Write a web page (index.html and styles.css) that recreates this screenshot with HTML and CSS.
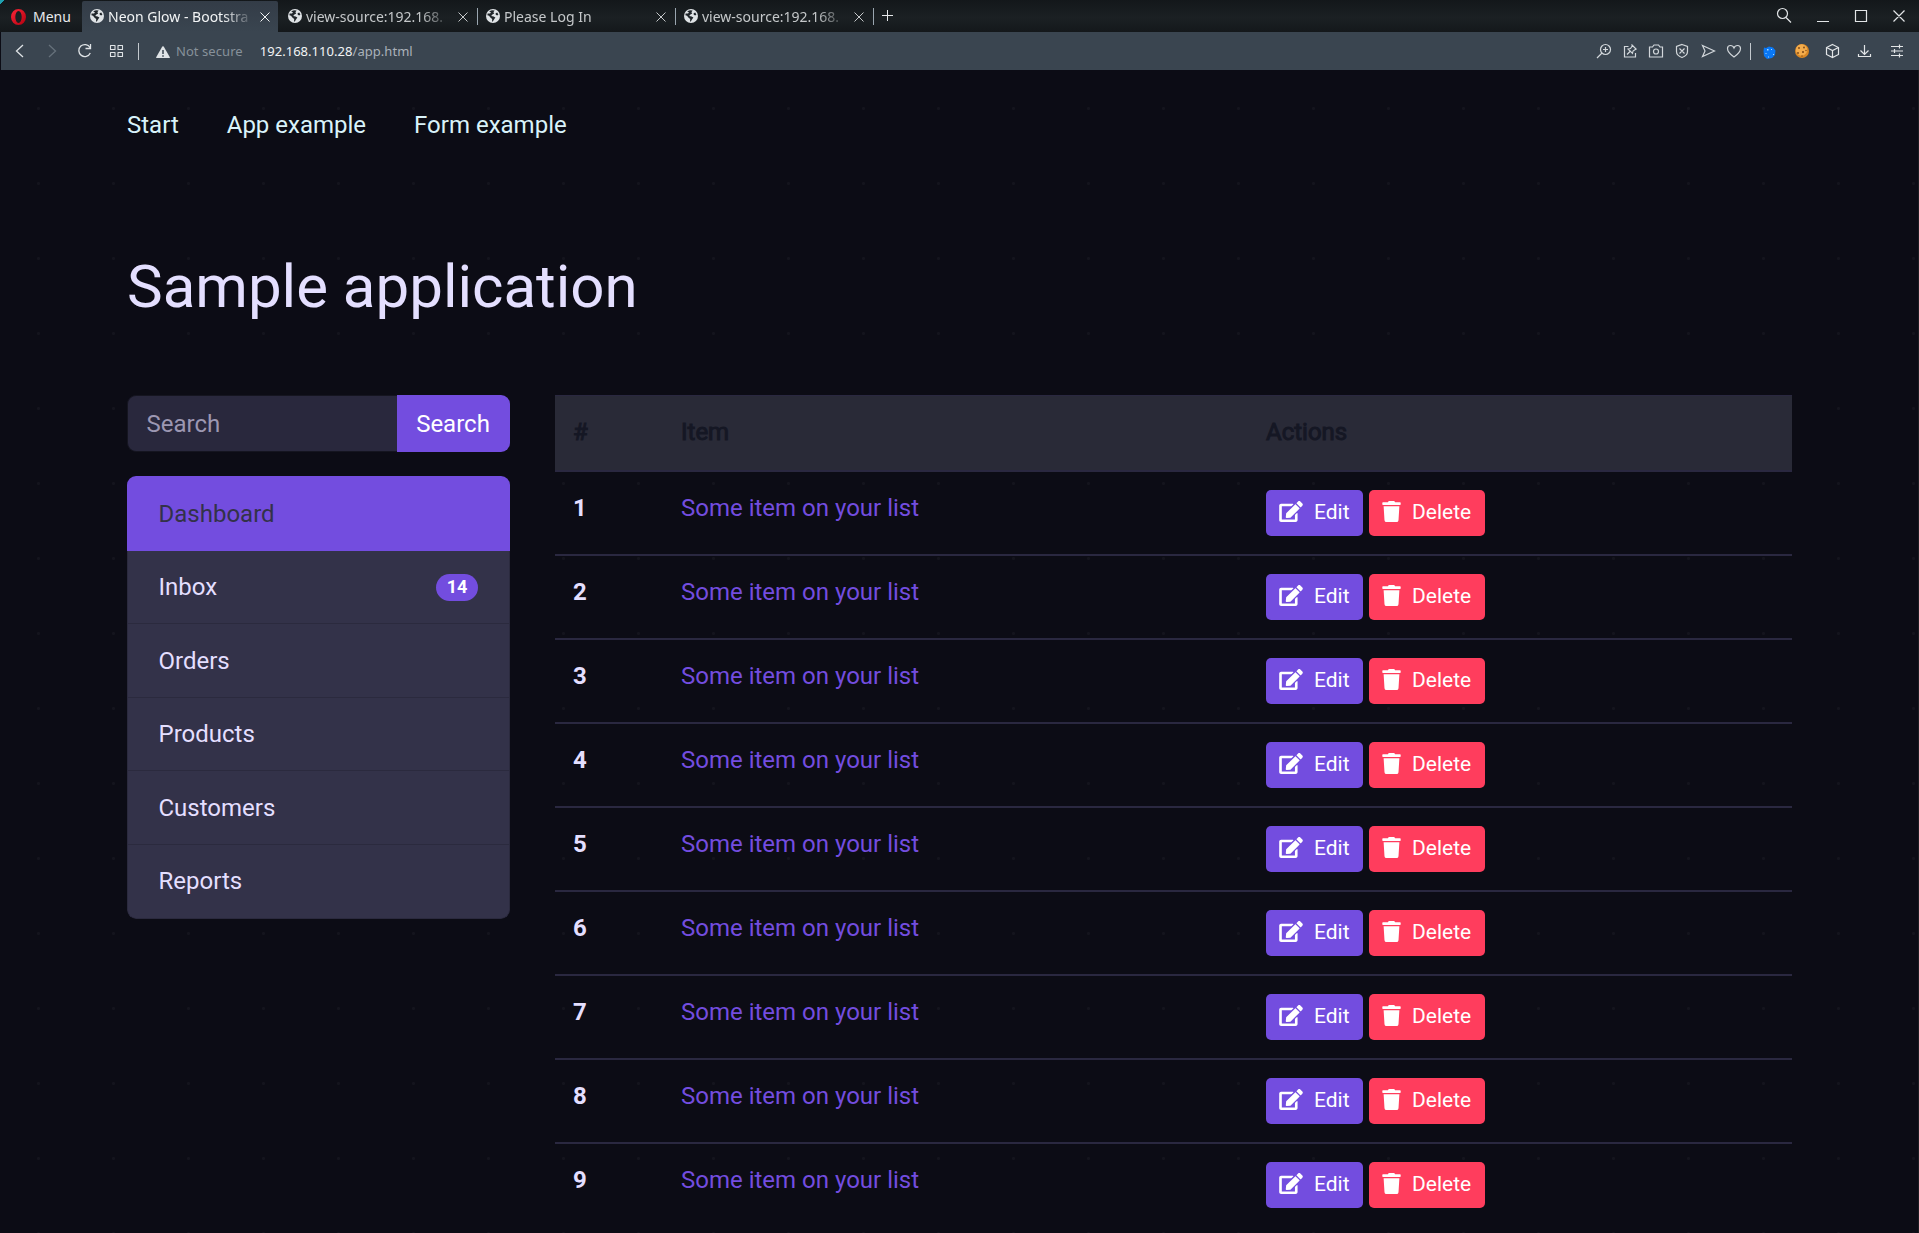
FILE: index.html
```html
<!DOCTYPE html>
<html lang="en">
<head>
<meta charset="utf-8">
<title>Neon Glow - Bootstrap</title>
<link rel="stylesheet" href="styles.css">
</head>
<body>
<svg class="defs" aria-hidden="true">
  <symbol id="globe" viewBox="0 0 14 14"><circle cx="7" cy="7" r="7" fill="#dfe3e6"/><path d="M3.2 2.2 6 1.2 8.6 1.6 7.4 3.2 8.2 4.6 6.4 5.6 5.2 7 7.6 7.4 9.4 8.6 8 10.4 6.8 12.6 6 12.4 6.2 10 4.6 8.8 3 6.8 1.4 6.2 1.6 4.6 4 4.6 5 3.4Z" fill="#20262b"/><path d="M9.6 4.2 11.2 3.4 12.4 5.4 11.2 6.6 9.8 5.8Z" fill="#20262b"/></symbol>
  <symbol id="cross" viewBox="0 0 10 10"><path d="M.5.5l9 9M9.5.5l-9 9" fill="none" stroke="currentColor"/></symbol>
  <symbol id="edit" viewBox="0 0 576 512"><path fill="currentColor" d="M402.6 83.2l90.2 90.2c3.8 3.8 3.8 10 0 13.8L274.4 405.6l-92.8 10.3c-12.4 1.4-22.9-9.1-21.5-21.5l10.3-92.8L388.8 83.2c3.8-3.8 10-3.8 13.8 0zm162-22.9l-48.8-48.8c-15.2-15.2-39.9-15.2-55.2 0l-35.4 35.4c-3.8 3.8-3.8 10 0 13.8l90.2 90.2c3.8 3.8 10 3.8 13.8 0l35.4-35.4c15.2-15.3 15.2-40 0-55.2zM384 346.2V448H64V128h229.8c3.2 0 6.2-1.3 8.5-3.5l40-40c7.6-7.6 2.2-20.5-8.5-20.5H48C21.5 64 0 85.5 0 112v352c0 26.5 21.5 48 48 48h352c26.5 0 48-21.5 48-48V306.2c0-10.7-12.9-16-20.5-8.5l-40 40c-2.2 2.3-3.5 5.3-3.5 8.5z"/></symbol>
  <symbol id="trash" viewBox="0 0 448 512"><path fill="currentColor" d="M432 32H312l-9.4-18.7A24 24 0 0 0 281.1 0H166.8a23.72 23.72 0 0 0-21.4 13.3L136 32H16A16 16 0 0 0 0 48v32a16 16 0 0 0 16 16h416a16 16 0 0 0 16-16V48a16 16 0 0 0-16-16zM53.2 467a48 48 0 0 0 47.9 45h245.8a48 48 0 0 0 47.9-45L416 128H32z"/></symbol>
</svg>

<header class="tabbar">
  <div class="menu">
    <svg width="15" height="16" viewBox="0 0 15 16"><defs><linearGradient id="o" x1="0" x2="1" y1="0" y2="1"><stop offset="0" stop-color="#ff2638"/><stop offset="1" stop-color="#b0000f"/></linearGradient></defs><path fill="url(#o)" fill-rule="evenodd" d="M7.5 0a7.5 8 0 1 0 0 16 7.5 8 0 1 0 0-16ZM7.5 2a3.2 6 0 1 1 0 12 3.2 6 0 1 1 0-12Z"/></svg>
    <span>Menu</span>
  </div>
  <div class="tab active"><svg class="globe"><use href="#globe"/></svg><span class="title">Neon Glow - Bootstra</span><svg class="close"><use href="#cross"/></svg></div>
  <div class="tab"><svg class="globe"><use href="#globe"/></svg><span class="title">view-source:192.168.</span><svg class="close"><use href="#cross"/></svg></div>
  <div class="tab"><svg class="globe"><use href="#globe"/></svg><span class="title">Please Log In</span><svg class="close"><use href="#cross"/></svg></div>
  <div class="tab"><svg class="globe"><use href="#globe"/></svg><span class="title">view-source:192.168.</span><svg class="close"><use href="#cross"/></svg></div>
  <svg class="plus" width="11" height="11" viewBox="0 0 11 11"><path d="M5.5 0v11M0 5.5h11" stroke="#e6e8ea"/></svg>
  <svg class="window-controls" width="130" height="32" viewBox="1776 0 130 32" fill="none" stroke="#e2e5e7" stroke-width="1.2"><circle cx="1782.500" cy="13.500" r="5"/><path d="M1786 17.500l5 5M1817 21.500h12M1855.500 10.500h11v11h-11zM1893.500 10.500l11 11M1904.500 10.500l-11 11"/></svg>
</header>

<div class="toolbar">
  <svg class="nav-icons" width="140" height="38" viewBox="10 0 140 38" fill="none" stroke="#dfe3e6" stroke-width="1.3">
    <path d="M23 13l-6.500 6 6.500 6"/><path d="M49 13l6.500 6-6.500 6" stroke="#66717b"/>
    <path d="M90 15.500a6 6 0 1 0 .3 5.500M90.500 12v4.500h-5"/>
    <path d="M110.500 13.500h4.500v4h-4.500zM118 13.500h4.500v4h-4.500zM110.500 20.500h4.500v4h-4.500zM118 20.500h4.500v4h-4.500z" stroke-width="1.100" stroke-linejoin="round"/>
    <path d="M138.500 11v17" stroke="#c3c9ce" stroke-width="1"/>
  </svg>
  <svg class="warning" width="14" height="12" viewBox="0 0 14 12"><path d="M6.300.5Q7 0 7.700.5L14 11.500 13.500 12H.5L0 11.500Z" fill="#dfe3e6"/><path d="M7 4v4M7 9.200v1.500" stroke="#3a4550" stroke-width="1.500"/></svg>
  <span class="insecure">Not secure</span>
  <span class="url">192.168.110.28<span class="path">/app.html</span></span>
  <svg class="actions" width="310" height="38" viewBox="1595 0 310 38" fill="none" stroke="#d2d7db" stroke-width="1.200">
    <circle cx="1605.500" cy="17.500" r="5"/><path d="M1602 21l-5 5M1603 17.500h5M1605.500 15v5"/>
    <path d="M1628.500 14.500h-4v10.500h11v-4M1627 22.500l3.500-3.500"/><path d="M1631.500 12.500l5 5M1632.500 13.500l-2 3-2.500.5 4.500 4.500.5-2.500 3-2" stroke-width="1.100"/>
    <path d="M1649.500 15h3l1.500-2h4.500l1.500 2h2.500v10h-13z"/><circle cx="1656" cy="19.500" r="2.500"/>
    <path d="M1682 12.500l5.500 2v5q0 4-5.500 6-5.500-2-5.500-6v-5zM1679.500 16.500l5 5M1684.500 16.500l-5 5"/>
    <path d="M1702.500 13.500l12 5.500-12 5.500 2.500-5.500z"/>
    <path d="M1734 25q-6.500-4.500-6.500-8.500 0-3 3-3 2.500 0 3.500 2.500 1-2.500 3.500-2.500 3 0 3 3 0 4-6.500 8.500z"/>
    <path d="M1750.500 11v17" stroke="#c3c9ce" stroke-width="1"/>
    <g stroke="none"><path d="M1764 15.500l2 .5 3-1.500 4 1 2.500 3-.5 4.500-3 3-5 1-3-3-.5-5z" fill="#0a78f5"/><path d="M1767 17h1.500v1.500h-1.500zM1771 17h1v1h-1zM1765.500 21h1v1h-1zM1768 24.500h1v1h-1zM1773 22h1v1h-1z" fill="#a8dcff"/>
    <circle cx="1802" cy="19" r="7" fill="#d98724"/><circle cx="1801.500" cy="18" r="5.700" fill="#f3ac4c"/><g fill="#7a4515"><circle cx="1799" cy="16" r=".9"/><circle cx="1804" cy="15.500" r=".9"/><circle cx="1798" cy="21" r=".9"/><circle cx="1803" cy="20" r="1"/><circle cx="1806" cy="18.500" r=".7"/><circle cx="1802" cy="24" r=".7"/></g></g>
    <path d="M1832.500 12.500l6 3v7l-6 3-6-3v-7zM1826.500 15.500l6 3 6-3M1832.500 18.500v7" stroke="#e2e5e7"/>
    <path d="M1864.500 13v9M1860.500 18.500l4 4 4-4M1858.500 22v2.500h12v-2.500" stroke="#e2e5e7"/>
    <path d="M1891 14.500h12M1891 19h12M1891 23.500h12M1899.500 12.500v4M1894.500 17v4M1899.500 21.500v4" stroke="#e2e5e7"/>
  </svg>
</div>

<main class="page">
  <nav class="topnav"><a>Start</a><a>App example</a><a>Form example</a></nav>
  <h1>Sample application</h1>
  <div class="columns">
    <aside>
      <div class="search"><div class="field">Search</div><div class="search-button">Search</div></div>
      <ul class="list">
        <li class="current">Dashboard</li>
        <li>Inbox<span class="badge">14</span></li>
        <li>Orders</li>
        <li>Products</li>
        <li>Customers</li>
        <li>Reports</li>
      </ul>
    </aside>
    <table>
      <colgroup><col class="col-number"><col class="col-item"><col></colgroup>
      <thead><tr><th>#</th><th>Item</th><th>Actions</th></tr></thead>
      <tbody>
        <tr><th>1</th><td>Some item on your list</td><td><div class="buttons"><a class="btn"><svg class="i-edit"><use href="#edit"/></svg>Edit</a><a class="btn danger"><svg class="i-trash"><use href="#trash"/></svg>Delete</a></div></td></tr>
        <tr><th>2</th><td>Some item on your list</td><td><div class="buttons"><a class="btn"><svg class="i-edit"><use href="#edit"/></svg>Edit</a><a class="btn danger"><svg class="i-trash"><use href="#trash"/></svg>Delete</a></div></td></tr>
        <tr><th>3</th><td>Some item on your list</td><td><div class="buttons"><a class="btn"><svg class="i-edit"><use href="#edit"/></svg>Edit</a><a class="btn danger"><svg class="i-trash"><use href="#trash"/></svg>Delete</a></div></td></tr>
        <tr><th>4</th><td>Some item on your list</td><td><div class="buttons"><a class="btn"><svg class="i-edit"><use href="#edit"/></svg>Edit</a><a class="btn danger"><svg class="i-trash"><use href="#trash"/></svg>Delete</a></div></td></tr>
        <tr><th>5</th><td>Some item on your list</td><td><div class="buttons"><a class="btn"><svg class="i-edit"><use href="#edit"/></svg>Edit</a><a class="btn danger"><svg class="i-trash"><use href="#trash"/></svg>Delete</a></div></td></tr>
        <tr><th>6</th><td>Some item on your list</td><td><div class="buttons"><a class="btn"><svg class="i-edit"><use href="#edit"/></svg>Edit</a><a class="btn danger"><svg class="i-trash"><use href="#trash"/></svg>Delete</a></div></td></tr>
        <tr><th>7</th><td>Some item on your list</td><td><div class="buttons"><a class="btn"><svg class="i-edit"><use href="#edit"/></svg>Edit</a><a class="btn danger"><svg class="i-trash"><use href="#trash"/></svg>Delete</a></div></td></tr>
        <tr><th>8</th><td>Some item on your list</td><td><div class="buttons"><a class="btn"><svg class="i-edit"><use href="#edit"/></svg>Edit</a><a class="btn danger"><svg class="i-trash"><use href="#trash"/></svg>Delete</a></div></td></tr>
        <tr><th>9</th><td>Some item on your list</td><td><div class="buttons"><a class="btn"><svg class="i-edit"><use href="#edit"/></svg>Edit</a><a class="btn danger"><svg class="i-trash"><use href="#trash"/></svg>Delete</a></div></td></tr>
      </tbody>
    </table>
  </div>
</main>
</body>
</html>
```

FILE: styles.css
```css
* { box-sizing: border-box; }
html { background: #0c0c15; }
body {
  margin: 0;
  width: 1919px;
  height: 1233px;
  overflow: hidden;
  display: flex;
  flex-direction: column;
  font-family: Roboto, sans-serif;
  font-size: 24px;
  line-height: 36px;
}
.defs { position: absolute; width: 0; height: 0; }

/* Browser chrome */
.tabbar {
  flex: none;
  display: flex;
  height: 32px;
  background: linear-gradient(135deg, #1fa0b0 3px, transparent 3px), linear-gradient(#13171a, #1b2023 55%, #14181b);
  font: 14px/18px "Noto Sans", sans-serif;
  color: #e8eaec;
}
.menu {
  width: 82px;
  padding: 8px 0 0 11px;
  display: flex;
  gap: 7px;
}
.menu svg { flex: none; margin-top: 1px; }
.tab {
  width: 198px;
  display: flex;
  align-items: flex-start;
  padding: 8px 9px 0 8px;
  color: #c5c8ca;
  background: linear-gradient(#9aa6b0, #9aa6b0) right 0 top 8px / 1px 17px no-repeat;
}
.tab.active {
  width: 196px;
  margin: 1px 2px 0 0;
  padding: 7px 8px 0 8px;
  border-radius: 2px 2px 0 0;
  background: linear-gradient(#333c47, #3a4550);
  color: #f2f4f5;
}
.globe { flex: none; width: 14px; height: 14px; margin-top: 1px; }
.title {
  flex: none;
  width: 148px;
  margin-left: 4px;
  white-space: nowrap;
  -webkit-mask-image: linear-gradient(90deg, #000 115px, transparent 146px);
  mask-image: linear-gradient(90deg, #000 115px, transparent 146px);
}
.close { flex: none; width: 10px; height: 10px; margin: 4px 0 0 3.500px; }
.plus { margin: 10px 0 0 8px; }
.window-controls { margin-left: auto; margin-right: 13px; }

.toolbar {
  flex: none;
  display: flex;
  height: 38px;
  margin-left: 1px;
  padding-right: 14px;
  background: #3a4550;
  font: 13px/18px "Noto Sans", sans-serif;
}
.nav-icons { margin-left: 9px; }
.warning { margin: 14px 0 0 6px; }
.insecure { margin: 10px 0 0 6px; letter-spacing: .06px; color: #87919a; }
.url { margin: 10px 0 0 17px; letter-spacing: .04px; color: #f2f4f5; }
.path { color: #aab2ba; }
.actions { margin-left: auto; }

/* Page */
.page {
  flex: 1;
  min-height: 0;
  margin-left: 1px;
  padding: 37px 126px 0 126px;
  border-right: 1px solid #1d1d22;
  background: radial-gradient(circle at 37.5px 38.500px, #14141d 1.200px, transparent 1.800px) 0 0 / 75px 75px #0c0c15;
}
.topnav {
  display: flex;
  gap: 48px;
  color: #d9f3fa;
}
h1 {
  margin: 108px 0 72px;
  font-size: 60px;
  font-weight: 400;
  line-height: 72px;
  color: #e4dfff;
}
.columns {
  display: flex;
  gap: 45px;
  align-items: flex-start;
}
aside { width: 383px; flex: none; }
.search { display: flex; height: 57px; }
.field {
  flex: 1;
  padding: 10px 18.500px;
  border: 1px solid #151520;
  border-right: 0;
  border-radius: 9px 0 0 9px;
  background: #29283d;
  color: #9c97b2;
}
.search-button {
  width: 113px;
  padding: 11px 1px 0 0;
  text-align: center;
  border-radius: 0 9px 9px 0;
  background: #734ddf;
  color: #fff;
}
.list {
  list-style: none;
  margin: 24px 0 0;
  padding: 0;
  border-radius: 9px;
  overflow: hidden;
  display: grid;
  grid-template-rows: 75px 73px 74px 73px 74px 74px;
}
.list li {
  display: flex;
  align-items: center;
  justify-content: space-between;
  padding: 0 31px 0 30.500px;
  border: 1px solid #2b2a3e;
  border-top: 0;
  background: #333249;
  color: #e4dfff;
}
.list .current {
  border: 0;
  padding: 1px 32px 0 31.500px;
  background: #734ddf;
  color: #333249;
}
.list li:last-child { padding-bottom: 1px; border-radius: 0 0 9px 9px; }
.badge {
  width: 42px;
  height: 27px;
  border-radius: 14px;
  background: #734ddf;
  color: #fff;
  font-size: 18px;
  font-weight: 700;
  line-height: 26px;
  text-align: center;
}

table {
  width: 1237px;
  table-layout: fixed;
  border-spacing: 0;
}
.col-number { width: 108px; }
.col-item { width: 585px; }
th, td { padding: 18px; text-align: left; vertical-align: top; }
thead th {
  height: 77px;
  background: #292a37;
  border-top: 1px solid #2a2840;
  border-bottom: 2px solid #2a2840;
  color: #151724;
  font-weight: 400;
  -webkit-text-stroke: 1px #151724;
}
tbody th, tbody td { height: 84px; border-bottom: 2px solid #2a2840; }
tbody tr:last-child > * { border-bottom-color: transparent; }
tbody th { color: #e4dfff; }
tbody td { color: #734ddf; }
.buttons { display: flex; gap: 6px; }
.btn {
  display: flex;
  width: 97px;
  height: 46px;
  padding: 6px 0 0 13px;
  border-radius: 5px;
  background: #734ddf;
  color: #fff;
  font-size: 21px;
  line-height: 32px;
}
.btn svg { flex: none; height: 21px; margin-top: 5px; }
.i-edit { width: 24px; margin-right: 11px; }
.i-trash { width: 19px; margin-right: 11px; }
.danger { width: 116px; background: #ff3d5d; }
```
